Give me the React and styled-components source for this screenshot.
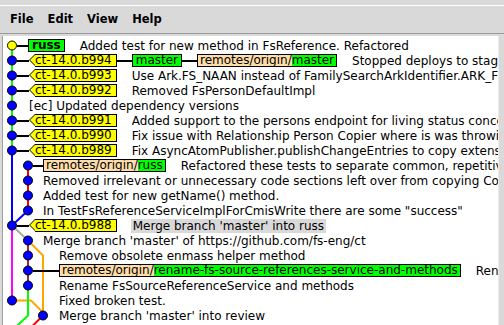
import React from 'react'
import styled, { createGlobalStyle } from 'styled-components'

const GlobalStyle = createGlobalStyle`
  html, body {
    margin: 0;
    padding: 0;
  }
  body {
    background: #d9d9d9;
    font-family: "DejaVu Sans", "Liberation Sans", sans-serif;
    overflow: hidden;
  }
`;

const Window = styled.div`
  width: 504px;
  height: 325px;
  display: flex;
  flex-direction: column;
  background: #d9d9d9;
  overflow: hidden;
`;

const MenuBar = styled.div`
  display: flex;
  margin-top: 5px;
  height: 27px;
  padding-left: 3px;
  border-top: 1px solid #ffffff;
  border-bottom: 1px solid #9c9c9c;
`;

const MenuItem = styled.span`
  padding: 0 7px;
  line-height: 27px;
  font-size: 11.5px;
  font-weight: bold;
  color: #000;
`;

const Canvas = styled.div`
  position: relative;
  flex: 1;
  margin: 2px 5px 0 2px;
  padding-top: 2px;
  border-left: 1px solid #a0a0a0;
  border-right: 1px solid #ececec;
  background: #fff;
  overflow: hidden;
`;

const Graph = styled.svg`
  position: absolute;
  left: 0;
  top: 0;
  z-index: 0;
`;

const Row = styled.div`
  position: relative;
  z-index: 1;
  display: flex;
  align-items: center;
  height: 15px;
  padding-left: ${p => p.$from}px;
  white-space: nowrap;
  font-size: 12px;
  color: #000;
`;

const Lead = styled.span`
  flex: none;
  width: ${p => p.$w}px;
  height: 2px;
  background: ${p => (p.$line ? '#000' : 'transparent')};
`;

const Link = styled.span`
  flex: none;
  width: 15px;
  height: 2px;
  background: #000;
`;

const Box = styled.span`
  flex: none;
  box-sizing: border-box;
  height: 13px;
  line-height: 11px;
  border: 1px solid #000;
`;

const Tag = styled(Box)`
  position: relative;
  margin-left: 6px;
  padding-right: 4px;
  border-left: none;
  background: #ffff00;

  &::before,
  &::after {
    content: '';
    position: absolute;
    width: 0;
    height: 0;
  }
  &::before {
    left: -6px;
    top: -1px;
    border-right: 6px solid #000;
    border-top: 6.5px solid transparent;
    border-bottom: 6.5px solid transparent;
  }
  &::after {
    left: -5px;
    top: 0;
    border-right: 5px solid #ffff00;
    border-top: 5.5px solid transparent;
    border-bottom: 5.5px solid transparent;
  }
`;

const Head = styled(Box)`
  padding: 0 3px;
  background: #00ff00;
  font-weight: ${p => (p.$bold ? 'bold' : 'normal')};
`;

const Remote = styled(Box)`
  display: flex;
`;

const Prefix = styled.span`
  padding-left: 2px;
  background: #ffddaa;
`;

const Branch = styled.span`
  padding-right: 2px;
  background: #00ff00;
`;

const Message = styled.span`
  flex: none;
  margin-left: ${p => p.$gap}px;
  padding: ${p => (p.$selected ? '0 2px' : '0')};
  line-height: 14px;
  background: ${p => (p.$selected ? '#d9d9d9' : 'transparent')};
`;

const COLS = [12, 28, 43];
const rowY = i => 45.5 + 15 * i;

const commits = [
  { col: 0, start: 28, head: true, labels: [{ kind: 'head', text: 'russ', bold: true }], msg: 'Added test for new method in FsReference. Refactored' },
  { col: 0, start: 29, labels: [{ kind: 'tag', text: 'ct-14.0.b994' }, { kind: 'head', text: 'master' }, { kind: 'remote', text: 'master' }], msg: 'Stopped deploys to staging' },
  { col: 0, start: 29, labels: [{ kind: 'tag', text: 'ct-14.0.b993' }], msg: 'Use Ark.FS_NAAN instead of FamilySearchArkIdentifier.ARK_FS_NAAN' },
  { col: 0, start: 29, labels: [{ kind: 'tag', text: 'ct-14.0.b992' }], msg: 'Removed FsPersonDefaultImpl' },
  { col: 0, start: 29, labels: [], msg: '[ec] Updated dependency versions' },
  { col: 0, start: 29, labels: [{ kind: 'tag', text: 'ct-14.0.b991' }], msg: 'Added support to the persons endpoint for living status concerns' },
  { col: 0, start: 29, labels: [{ kind: 'tag', text: 'ct-14.0.b990' }], msg: 'Fix issue with Relationship Person Copier where is was throwing an error' },
  { col: 0, start: 29, labels: [{ kind: 'tag', text: 'ct-14.0.b989' }], msg: 'Fix AsyncAtomPublisher.publishChangeEntries to copy extensions' },
  { col: 1, start: 43, labels: [{ kind: 'remote', text: 'russ' }], msg: 'Refactored these tests to separate common, repetitive code' },
  { col: 1, start: 43, labels: [], msg: 'Removed irrelevant or unnecessary code sections left over from copying Code' },
  { col: 1, start: 43, labels: [], msg: 'Added test for new getName() method.' },
  { col: 1, start: 43, labels: [], msg: 'In TestFsReferenceServiceImplForCmisWrite there are some "success"' },
  { col: 0, start: 29, labels: [{ kind: 'tag', text: 'ct-14.0.b988' }], msg: "Merge branch 'master' into russ", selected: true },
  { col: 1, start: 43, labels: [], msg: "Merge branch 'master' of https://github.com/fs-eng/ct" },
  { col: 1, start: 59, labels: [], msg: 'Remove obsolete enmass helper method' },
  { col: 1, start: 59, labels: [{ kind: 'remote', text: 'rename-fs-source-references-service-and-methods' }], msg: 'Rename FsSourceReferenceService and methods' },
  { col: 1, start: 59, labels: [], msg: 'Rename FsSourceReferenceService and methods' },
  { col: 0, start: 59, labels: [], msg: 'Fixed broken test.' },
  { col: 2, start: 59, labels: [], msg: "Merge branch 'master' into review" },
];

// lane segments in page coordinates
const lanes = [
  { color: '#00ff00', d: `M12 ${rowY(0)} V${rowY(7)}` },
  { color: '#0000ff', d: `M12 ${rowY(7)} V${rowY(12)}` },
  { color: '#ff0000', d: `M28 ${rowY(8)} V${rowY(11)}` },
  { color: '#0000ff', d: `M28 ${rowY(11)} L12 ${rowY(12)}` },
  { color: '#ff00ff', d: `M12 ${rowY(12)} V${rowY(17)}` },
  { color: '#a9a9a9', d: `M12 ${rowY(12)} L28 ${rowY(13)}` },
  { color: '#a52a2a', d: `M28 ${rowY(13)} V${rowY(16)}` },
  { color: '#ffa500', d: `M28 ${rowY(13)} L43 ${rowY(14)} V${rowY(18)}` },
  { color: '#ffa500', d: `M12 ${rowY(17)} H31 L43 ${rowY(18) - 3}` },
  { color: '#00ff00', d: `M28 ${rowY(16)} V${rowY(18)} L12 ${rowY(19)}` },
  { color: '#ff0000', d: `M43 ${rowY(18)} L28 ${rowY(19)}` },
];

const Label = ({ label }) => {
  if (label.kind === 'tag') return <Tag>{label.text}</Tag>;
  if (label.kind === 'head') return <Head $bold={label.bold}>{label.text}</Head>;
  return (
    <Remote>
      <Prefix>remotes/origin/</Prefix>
      <Branch>{label.text}</Branch>
    </Remote>
  );
};

const CommitRow = ({ commit }) => {
  const dotX = COLS[commit.col];
  const hasLabels = commit.labels.length > 0;
  return (
    <Row $from={dotX + 5 - 3}>
      <Lead $w={commit.start - dotX - 5} $line={hasLabels} />
      {commit.labels.map((l, i) => (
        <React.Fragment key={i}>
          {i > 0 && <Link />}
          <Label label={l} />
        </React.Fragment>
      ))}
      <Message $gap={hasLabels ? (commit.selected ? 14 : 15) : 0} $selected={commit.selected}>
        {commit.msg}
      </Message>
    </Row>
  );
};

const App = () => (
  <Window>
    <GlobalStyle />
    <MenuBar>
      <MenuItem>File</MenuItem>
      <MenuItem>Edit</MenuItem>
      <MenuItem>View</MenuItem>
      <MenuItem>Help</MenuItem>
    </MenuBar>
    <Canvas>
      <Graph width="70" height="300">
        <g transform="translate(-3 -36)">
          {lanes.map((l, i) => (
            <path key={i} d={l.d} stroke={l.color} strokeWidth="2" fill="none" />
          ))}
          {commits.map((c, i) => (
            <circle
              key={i}
              cx={COLS[c.col]}
              cy={rowY(i)}
              r="4.5"
              fill={c.head ? '#ffff00' : '#0000ff'}
              stroke="#000"
              strokeWidth="1"
            />
          ))}
        </g>
      </Graph>
      {commits.map((c, i) => (
        <CommitRow key={i} commit={c} />
      ))}
    </Canvas>
  </Window>
);

export default App
